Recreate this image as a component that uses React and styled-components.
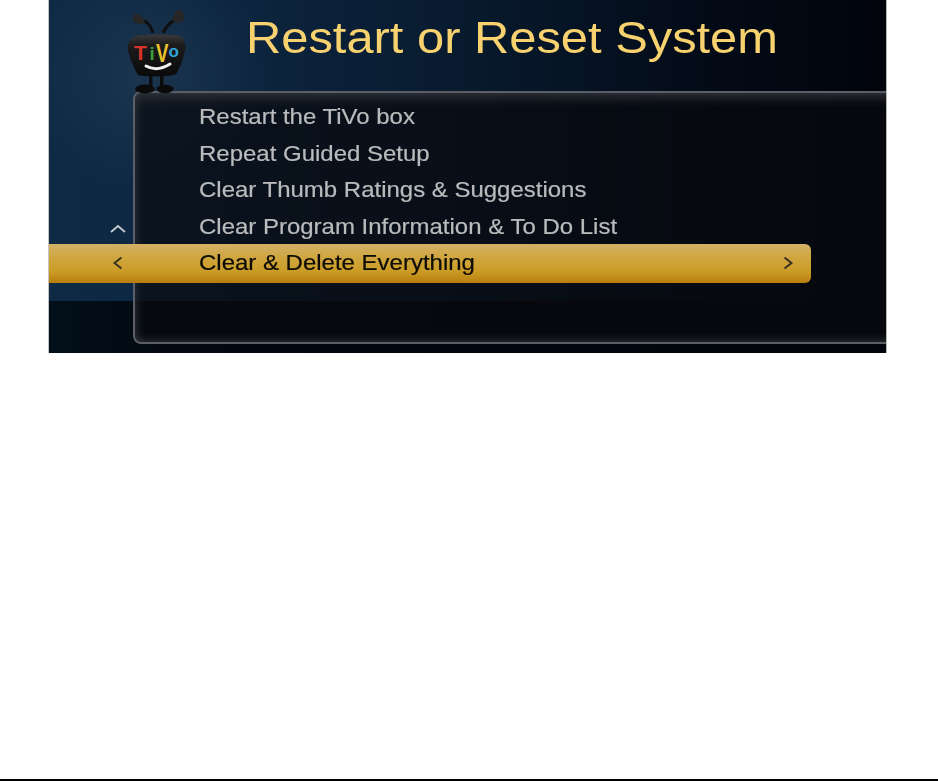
import styled, { createGlobalStyle, css } from 'styled-components'

const items = [
  'Restart the TiVo box',
  'Repeat Guided Setup',
  'Clear Thumb Ratings & Suggestions',
  'Clear Program Information & To Do List',
]

export default function App() {
  return (
    <Page>
      <GlobalStyle />
      <Screen>
        <Header>
          <TivoLogo />
          <Title>Restart or Reset System</Title>
        </Header>
        <Panel>
          <Menu>
            {items.map((item, i) => (
              <Row key={item}>
                {i === items.length - 1 && <UpArrow />}
                <RowLabel>{item}</RowLabel>
              </Row>
            ))}
            <SelectedRow>
              <LeftArrow />
              <SelectedLabel>Clear &amp; Delete Everything</SelectedLabel>
              <RightArrow />
            </SelectedRow>
          </Menu>
        </Panel>
      </Screen>
      <BottomRule />
    </Page>
  )
}

const TivoLogo = () => (
  <Logo viewBox="0 0 120 110" width="120" height="110">
    <defs>
      <linearGradient id="head" x1="0" y1="0" x2="0" y2="1">
        <stop offset="0" stopColor="#3a3a3c" />
        <stop offset="0.25" stopColor="#1c1c1d" />
        <stop offset="1" stopColor="#0a0a0b" />
      </linearGradient>
    </defs>
    <path d="M53 33C50 24 47 20 38 21" fill="none" stroke="#0e0e0e" strokeWidth="3" />
    <path d="M63 33C66 26 70 22 77 19" fill="none" stroke="#0e0e0e" strokeWidth="3" />
    <path d="M33 20C33 15 35 13 38 14C42 16 44 19 45 23C40 25 34 24 33 20Z" fill="#262626" />
    <path d="M72 20C73 14 77 9 80 10C84 12 85 16 83 21C79 24 74 23 72 20Z" fill="#262626" />
    <rect x="49" y="74" width="3.500" height="14" fill="#0c0c0c" />
    <rect x="60" y="74" width="3.500" height="14" fill="#0c0c0c" />
    <ellipse cx="45" cy="89" rx="10" ry="4.400" fill="#0b0b0b" />
    <ellipse cx="65" cy="89" rx="8.500" ry="4.200" fill="#0b0b0b" />
    <path
      d="M36 36C46 34 70 34 80 36C83 37 85 42 85.500 47C84 58 80 68 76 74C73 77 42 77 38 75C34 68 29 58 27.500 47C28 42 32 37 36 36Z"
      fill="url(#head)"
    />
    <LogoLetter x="34" y="60" fontSize="21" fill="#d9352c">T</LogoLetter>
    <LogoLetter x="49.500" y="60" fontSize="19" fill="#3f9d3c">i</LogoLetter>
    <LogoLetter transform="translate(56 62) scale(0.72 1)" fontSize="26" fill="#e9c52c">V</LogoLetter>
    <LogoLetter x="68.500" y="57" fontSize="17" fill="#2ea6dc">o</LogoLetter>
    <path d="M46 66C53 70 62 69 70 64" fill="none" stroke="#f1f1f1" strokeWidth="3" strokeLinecap="round" />
  </Logo>
)

const Chevron = ({ d, className }) => (
  <svg className={className} width="16" height="14" viewBox="0 0 16 14">
    <path d={d} fill="none" stroke="currentColor" strokeWidth="2" />
  </svg>
)

const GlobalStyle = createGlobalStyle`
  html, body {
    margin: 0;
    padding: 0;
    background: #fff;
  }
`

// the picture is stretched sideways, so the text is too
const stretched = css`
  display: inline-block;
  transform: scaleX(1.09);
  transform-origin: left center;
  filter: blur(0.35px);
`

const Page = styled.div`
  display: flex;
  flex-direction: column;
  justify-content: space-between;
  height: 781px;
  overflow: hidden;
  font-family: 'Liberation Sans', Arial, sans-serif;
`

const Screen = styled.div`
  width: 837px;
  height: 353px;
  margin-left: 49px;
  overflow: hidden;
  box-shadow: 1px 0 0 #b8b8b8, -1px 0 0 #c4c4c4;
  background:
    linear-gradient(90deg, #031019 0, #020812 15%, #01040a 100%) 0 301px / 100% 52px no-repeat,
    radial-gradient(circle 120px at 100px 75px, rgba(60, 84, 108, 0.3), rgba(60, 84, 108, 0)),
    linear-gradient(90deg, #0e2a45 0, #0d2640 20%, #081a2e 50%, #030a16 80%, #01040b 100%);
`

const Header = styled.div`
  display: flex;
  align-items: flex-start;
  height: 91px;
`

const Logo = styled.svg`
  flex: none;
  position: relative;
  z-index: 2;
  margin-left: 51px;
`

const Title = styled.h1`
  display: inline-block;
  transform: scaleX(1.11);
  transform-origin: left center;
  filter: blur(0.35px);
  margin: 13px 0 0 26px;
  font-size: 44px;
  line-height: 50px;
  font-weight: 400;
  color: #f8d26f;
  white-space: nowrap;
`

const LogoLetter = styled.text`
  font-family: 'Liberation Sans', Arial, sans-serif;
  font-weight: 700;
`

const Panel = styled.div`
  box-sizing: border-box;
  position: relative;
  width: 780px;
  height: 253px;
  margin-left: 84px;
  border: 2px solid #5a5e66;
  border-radius: 8px;
  box-shadow:
    inset 0 12px 12px -8px #33363b,
    inset 0 -8px 8px -6px #2a2c30,
    inset 8px 0 8px -6px #2a2f36;
  background: rgba(8, 10, 14, 0.7);
`

const Menu = styled.div`
  display: flex;
  flex-direction: column;
  padding-top: 6px;
`

const Row = styled.div`
  position: relative;
  height: 36.500px;
  padding-left: 64px;
  font-size: 22px;
  line-height: 36.500px;
  color: #b9bbbc;
  -webkit-text-stroke: 0.2px #b9bbbc;
  white-space: nowrap;
`

const RowLabel = styled.span`
  ${stretched}
`

const SelectedRow = styled.div`
  display: flex;
  align-items: center;
  box-sizing: border-box;
  width: 762px;
  height: 39px;
  margin: -1px 0 0 -86px;
  padding: 0 15px 2px 61px;
  border-radius: 0 6px 6px 0;
  background: linear-gradient(180deg, #d3b067 0, #cfa63f 35%, #cb9c25 70%, #b87d0e 100%);
  color: #3b3322;
`

const SelectedLabel = styled.span`
  ${stretched}
  flex: 1;
  margin-left: 73px;
  font-size: 22px;
  color: #0d0b06;
  -webkit-text-stroke: 0.2px #0d0b06;
  white-space: nowrap;
`

const LeftArrow = styled(Chevron).attrs({ d: 'M11.500 1.500L4.500 7L11.500 12.500' })`
  flex: none;
`

const RightArrow = styled(Chevron).attrs({ d: 'M4.500 1.500L11.500 7L4.500 12.500' })`
  flex: none;
`

const UpArrow = styled(Chevron).attrs({ d: 'M1 11L8 5L15 11' })`
  position: absolute;
  left: -25px;
  top: 12px;
  color: #c4c8cc;
`

const BottomRule = styled.div`
  height: 2px;
  background: #000;
`
